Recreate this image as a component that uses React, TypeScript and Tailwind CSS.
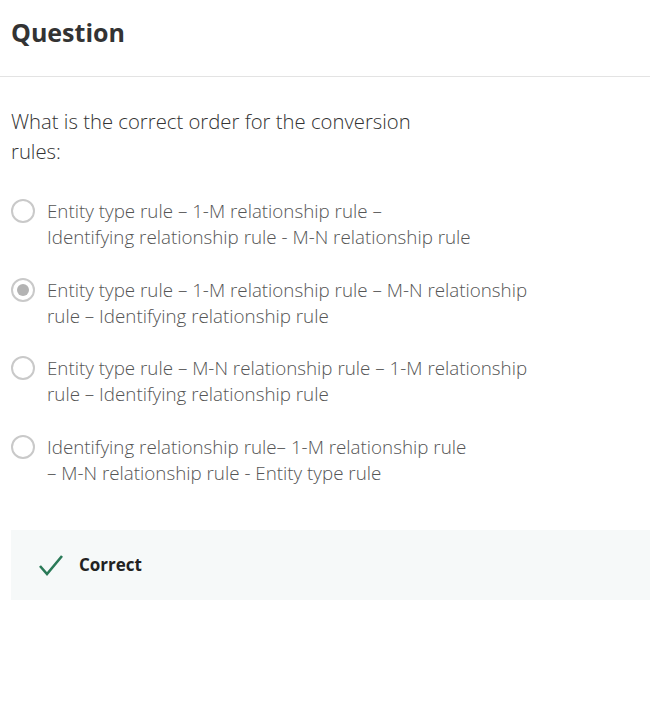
const options: { lines: string[]; selected?: boolean }[] = [
  { lines: ['Entity type rule – 1-M relationship rule –', 'Identifying relationship rule - M-N relationship rule'] },
  { lines: ['Entity type rule – 1-M relationship rule – M-N relationship', 'rule – Identifying relationship rule'], selected: true },
  { lines: ['Entity type rule – M-N relationship rule – 1-M relationship', 'rule – Identifying relationship rule'] },
  { lines: ['Identifying relationship rule– 1-M relationship rule', '– M-N relationship rule - Entity type rule'] },
]

function Radio({ selected }: { selected?: boolean }) {
  return (
    <span className="mt-[1px] flex h-[24px] w-[24px] shrink-0 items-center justify-center rounded-full border-[2.5px] border-[#c9c9c9] bg-white">
      {selected && <span className="h-[12px] w-[12px] rounded-full bg-[#b3b3b3]" />}
    </span>
  )
}

export default function App() {
  return (
    <div className="min-h-[703px] bg-white font-['Open_Sans',sans-serif]">
      <div className="border-b border-[#e3e3e3] px-[11px] pb-[27px] pt-[15px]">
        <h1 className="text-[25px] font-bold leading-[34px] text-[#333333]">Question</h1>
      </div>

      <div className="px-[11px] pt-[29px]">
        <p className="w-[430px] text-[20.3px] font-light leading-[30px] text-[#333333]">
          What is the correct order for the conversion rules:
        </p>

        <div className="mt-[32px] flex flex-col gap-[26.5px]">
          {options.map((o, i) => (
            <label key={i} className="flex items-start gap-[12px]">
              <Radio selected={o.selected} />
              <span className="text-[18.8px] font-light leading-[26px] text-[#555555]">
                {o.lines[0]}
                <br />
                {o.lines[1]}
              </span>
            </label>
          ))}
        </div>
      </div>

      <div className="ml-[11px] mt-[44px] flex h-[70px] items-center gap-[15px] bg-[#f6f9f9] pl-[27px]">
        <svg width="26" height="22" viewBox="0 0 26 22" fill="none">
          <path d="M2 12 L9 20 L24 2" stroke="#2a7a58" strokeWidth="2.6" />
        </svg>
        <span className="text-[17px] font-bold text-[#222222]">Correct</span>
      </div>
    </div>
  )
}
